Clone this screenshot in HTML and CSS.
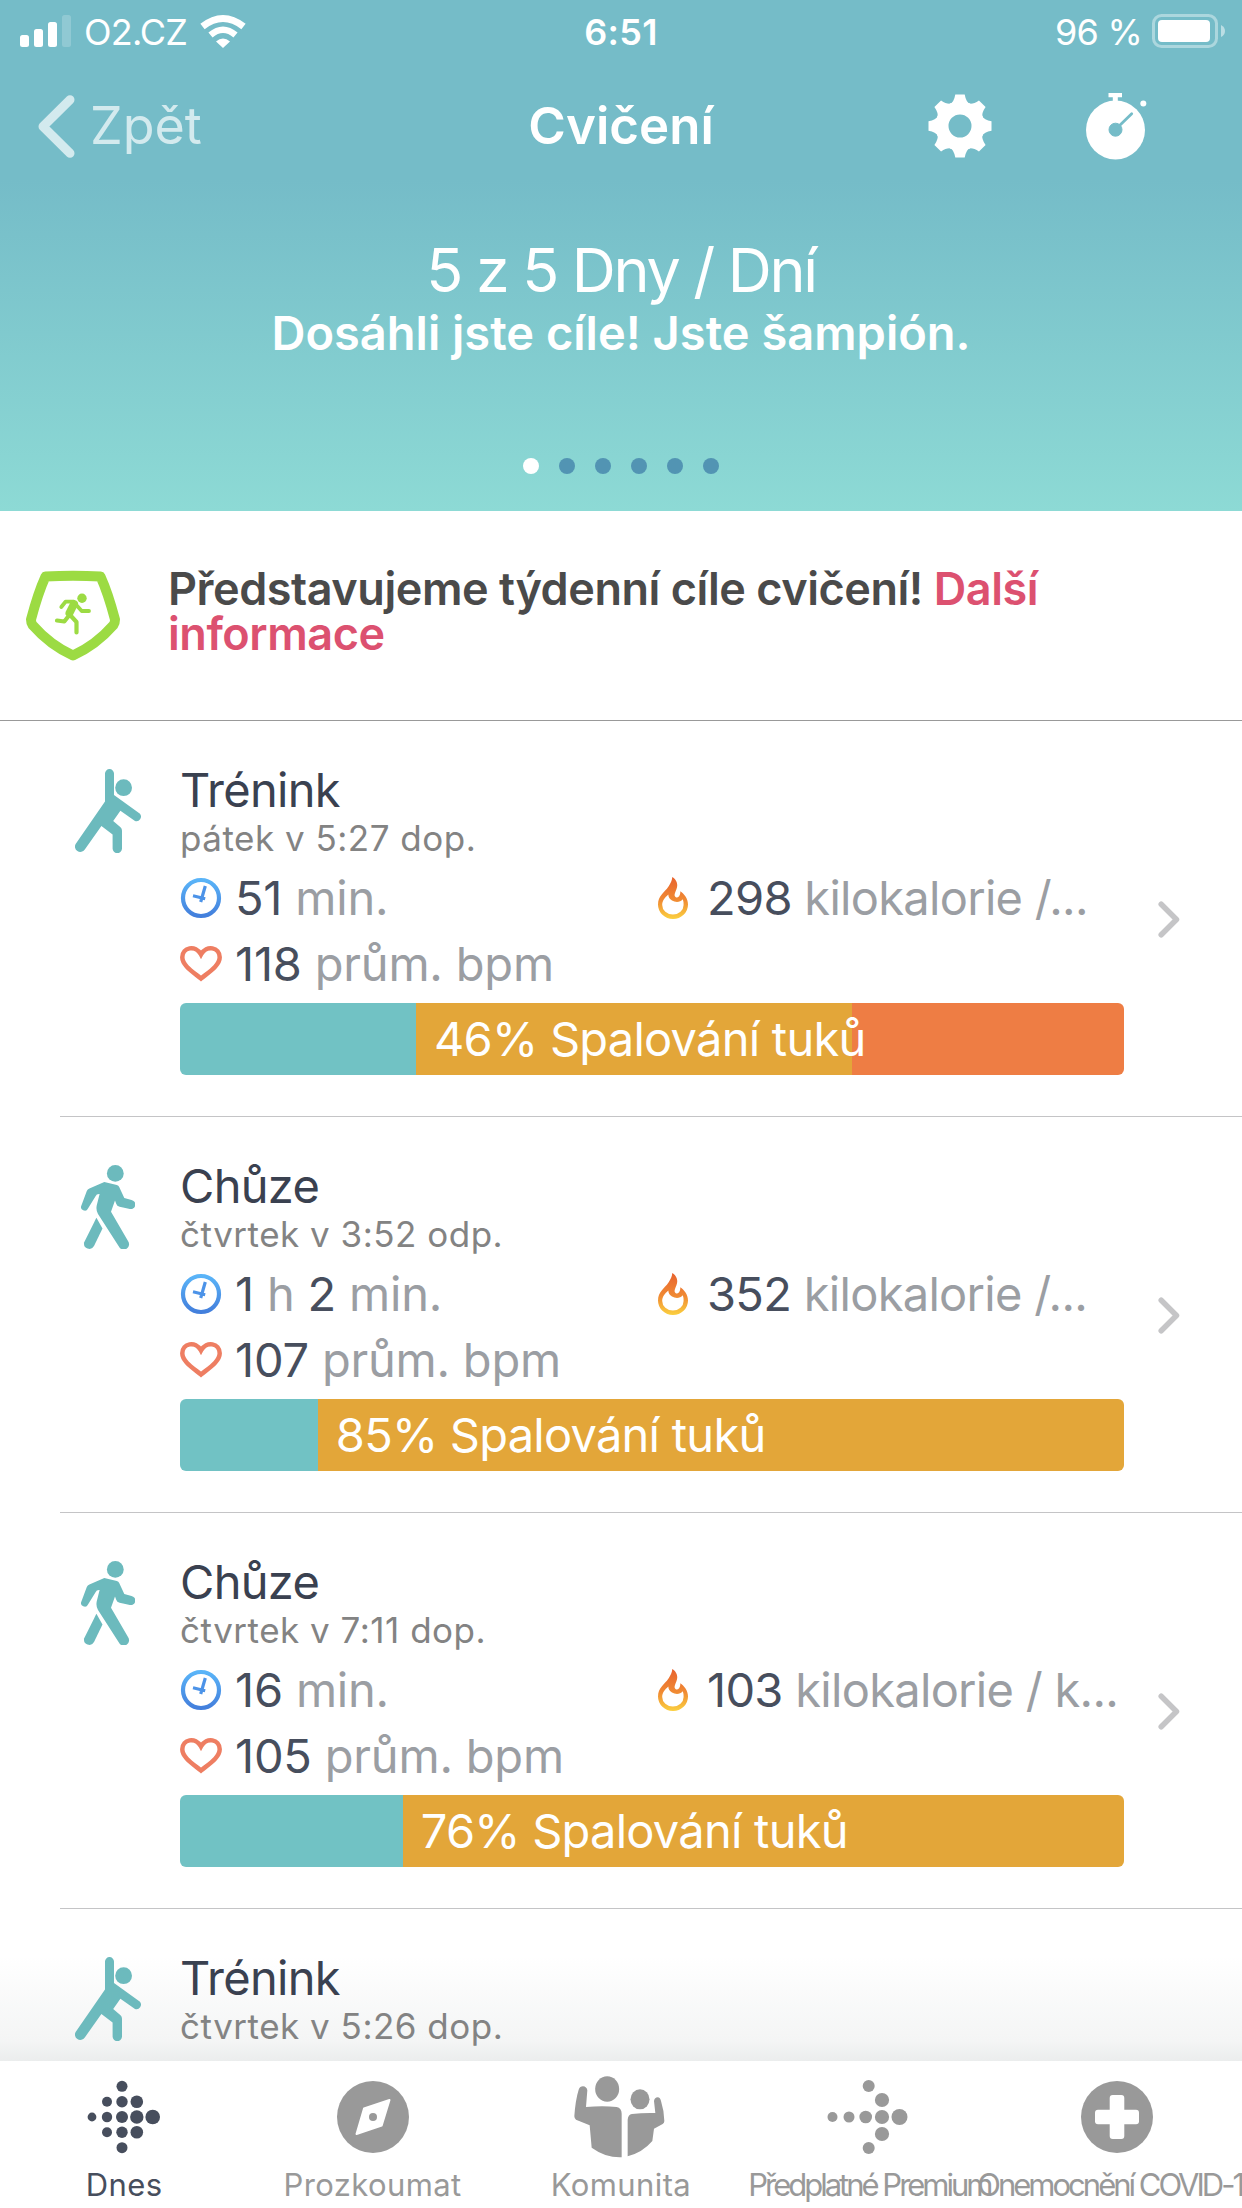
FILE: index.html
```html
<!DOCTYPE html>
<html lang="cs">
  <head>
    <meta charset="UTF-8" />
    <title>Cvičení</title>
    <meta name="viewport" content="width=device-width, initial-scale=1.0" />
    <link rel="stylesheet" href="styles.css">
  </head>
  <body>
    <!-- Shared icons -->
    <svg width="0" height="0">
      <defs>
        <linearGradient id="blue" x1="0" y1="0" x2="0" y2="1">
          <stop offset="0" stop-color="#5ab4f8" />
          <stop offset="1" stop-color="#437fdc" />
        </linearGradient>
        <linearGradient id="flame" x1="0" y1="0" x2="0" y2="1">
          <stop offset="0" stop-color="#e8632f" />
          <stop offset="0.55" stop-color="#f08a33" />
          <stop offset="1" stop-color="#fbd03f" />
        </linearGradient>
        <symbol id="icon-workout" viewBox="0 0 67 84">
          <circle cx="48.6" cy="18.7" r="8.4" />
          <path d="M30 32.5V4.6a4.5 4.5 0 0 1 9 0V26L65 44.8a4.6 4.6 0 0 1-5 7.2L45.4 41.8 38.2 52l7.3 6.2q1.5 1.3 1.5 3.5V79.5a4.7 4.7 0 0 1-9.4 0V65.5L26.4 57 9.8 80.5a5.3 5.3 0 0 1-9-5.8Z" />
        </symbol>
        <symbol id="icon-walk" viewBox="0 0 54 84">
          <circle cx="34.3" cy="8.4" r="8.4" />
          <path d="M23.3 17 35.8 20q1.8.5 2.4 2.1L43.3 33l7.2 1.9a4.6 4.6 0 0 1-1.6 9.1l-10.3-2.3q-2.7-.7-3.4-3l-1.2-3.1L30 46.7 47 76a5.3 5.3 0 0 1-8.5 6.4L17 49q-2.2-3.5-1.3-8.5l2.9-11.5q-3-.3-4.2 2.4L7 43.5a3.6 3.6 0 0 1-6.6-3L5.8 26q.7-1.8 2.6-2.6Z" />
          <path d="M15.4 52.7 21.5 63.5 13 81a5.3 5.3 0 0 1-9.8-3.8Z" />
        </symbol>
        <symbol id="icon-clock" viewBox="0 0 42 42">
          <circle cx="21" cy="21" r="18" fill="none" stroke="url(#blue)" stroke-width="4.2" />
          <path d="M25.3 9 20.7 25M13 18.8l12.2 3" fill="none" stroke="#4c93e8" stroke-width="3.2" />
        </symbol>
        <symbol id="icon-heart" viewBox="0 0 42 38">
          <path d="M21 33.5C13 27 2.3 20.5 2.3 12.3 2.3 2.5 15.5-.8 21 9.5 26.5-.8 39.7 2.5 39.7 12.3 39.7 20.5 29 27 21 33.5Z" fill="none" stroke="#ee7e62" stroke-width="4.5" />
        </symbol>
        <symbol id="icon-fire" viewBox="0 0 30 42">
          <path fill="url(#flame)" fill-rule="evenodd" d="M14.3 0C18.5 2.5 20.5 7.5 18.5 12 17 16 15.5 18.5 17.8 20.2 21 21.5 22.5 17.5 22.3 14.3 26 17 30 21.5 30 27.5A15 14.5 0 0 1 0 27.5C0 18.5 6.5 15.5 10.5 9.5 12.8 6 14 3.5 14.3 0ZM10.3 17.5C7 20.5 4.2 23.5 4.2 28A10.7 9.6 0 0 0 25.6 28Q25.8 25 24.8 22.3C22 25.5 17.5 25.5 14 23.5 11.5 22 10.5 20.5 10.3 17.5Z" />
        </symbol>
        <symbol id="icon-next" viewBox="0 0 22 37">
          <path d="M3.2 3.2 18.5 18.5 3.2 33.8" fill="none" stroke="#c5c5c7" stroke-width="5.5" stroke-linecap="round" stroke-linejoin="round" />
        </symbol>
      </defs>
    </svg>

    <div class="screen">
      <header class="header">
        <div class="status-bar">
          <div class="status-left">
            <svg width="51" height="32" viewBox="0 0 51 32" fill="#fff">
              <rect x="0" y="20" width="9" height="12" rx="2.5" />
              <rect x="14" y="14" width="9" height="18" rx="2.5" />
              <rect x="28" y="7" width="9" height="25" rx="2.5" />
              <rect x="42" y="0" width="9" height="32" rx="2.5" opacity="0.2" />
            </svg>
            <span class="carrier">O2.CZ</span>
            <svg width="46" height="33" viewBox="0 0 46 33" fill="none" stroke="#fff">
              <path d="M2.5 11.5Q23-4.5 43.5 11.5" stroke-width="7" />
              <path d="M10.5 20Q23 9.5 35.5 20" stroke-width="6.5" />
              <path d="M16 26.5Q23 20.5 30 26.5L23 33Z" fill="#fff" stroke="none" />
            </svg>
          </div>
          <span class="clock">6:51</span>
          <div class="status-right">
            <span class="percent">96 %</span>
            <svg width="74" height="34" viewBox="0 0 74 34">
              <rect x="1.5" y="1.5" width="63" height="31" rx="8" fill="none" stroke="#fff" stroke-width="3" opacity="0.4" />
              <rect x="6" y="6" width="52" height="22" rx="4" fill="#fff" />
              <path d="M69 11q4 2 4 6t-4 6Z" fill="#fff" opacity="0.5" />
            </svg>
          </div>
        </div>

        <nav class="nav">
          <a class="back" href="#">
            <svg width="37" height="63" viewBox="0 0 37 63">
              <path d="M32 4.7 5 31.5 32 58.3" fill="none" stroke="#d3eaee" stroke-width="9" stroke-linecap="round" stroke-linejoin="round" />
            </svg>
            <span>Zpět</span>
          </a>
          <h1 class="title">Cvičení</h1>
          <div class="nav-actions">
            <svg width="64" height="64" viewBox="-32 -32 64 64" fill="#fff">
              <circle r="18" fill="none" stroke="#fff" stroke-width="13" />
              <g id="teeth">
                <path id="tooth" d="M-10-22Q-6-24-4.7-31.5H4.7Q6-24 10-22Z" />
                <use href="#tooth" transform="rotate(45)" />
                <use href="#tooth" transform="rotate(90)" />
                <use href="#tooth" transform="rotate(135)" />
              </g>
              <use href="#teeth" transform="rotate(180)" />
            </svg>
            <svg width="62" height="67" viewBox="0 0 62 67" fill="#fff">
              <circle cx="29.5" cy="37" r="29.5" />
              <path d="M22.5 0h13.5v4.3h-4.2V9h-5V4.3h-4.3Z" />
              <circle cx="57.3" cy="10.5" r="3" />
              <g class="dial"><circle cx="29.5" cy="36.7" r="6.5" /><path d="M32 34 45.7 20.7" stroke-width="2.8" stroke-linecap="round" /></g>
            </svg>
          </div>
        </nav>

        <div class="goal">
          <div class="goal-count">5 z 5 Dny / Dní</div>
          <div class="goal-text">Dosáhli jste cíle! Jste šampión.</div>
        </div>
        <div class="dots">
          <span class="dot active"></span><span class="dot"></span><span class="dot"></span>
          <span class="dot"></span><span class="dot"></span><span class="dot"></span>
        </div>
      </header>

      <section class="promo">
        <svg width="94" height="90" viewBox="0 0 94 90" fill="none" stroke="#9cdb43" stroke-linejoin="round" stroke-linecap="round">
          <path d="M19.5 5.5Q47 4 74.5 5.5 82 22 89 48.5 89 52 87.5 54 70 74 47 84.5 24 74 6.5 54 5 52 5 48.5 12 22 19.5 5.5Z" stroke-width="10" />
          <circle cx="56" cy="27.3" r="4.7" fill="#9cdb43" stroke="none" />
          <path d="M48 33 43.5 42" stroke-width="8" />
          <path d="M47 30.7H39.5L35.3 36M51 34.7 55.7 40H63" stroke-width="3.8" />
          <path d="M45 45 50.5 51V61.5M43 44.5 38.3 50.5 31 49.5" stroke-width="4.2" />
        </svg>
        <p>Představujeme týdenní cíle cvičení! <a href="#">Další informace</a></p>
      </section>

      <main class="list">
        <article class="exercise">
          <svg class="type" width="67" height="84"><use href="#icon-workout" /></svg>
          <div class="info">
            <h2>Trénink</h2>
            <div class="date">pátek v 5:27 dop.</div>
            <div class="metrics">
              <div class="metric"><svg width="42" height="42"><use href="#icon-clock" /></svg><span><b>51</b> min.</span></div>
              <div class="metric energy"><svg width="30" height="42"><use href="#icon-fire" /></svg><span><b>298</b> kilokalorie /...</span></div>
              <div class="metric"><svg width="42" height="38"><use href="#icon-heart" /></svg><span><b>118</b> prům. bpm</span></div>
            </div>
            <div class="zones">
              <div class="zone light" style="width: 25%"></div>
              <div class="zone fat" style="width: 46.2%">46% Spalování tuků</div>
              <div class="zone cardio"></div>
            </div>
          </div>
          <svg class="next" width="22" height="37"><use href="#icon-next" /></svg>
        </article>

        <article class="exercise">
          <svg class="type walk" width="54" height="84"><use href="#icon-walk" /></svg>
          <div class="info">
            <h2>Chůze</h2>
            <div class="date">čtvrtek v 3:52 odp.</div>
            <div class="metrics">
              <div class="metric"><svg width="42" height="42"><use href="#icon-clock" /></svg><span><b>1</b> h <b>2</b> min.</span></div>
              <div class="metric energy"><svg width="30" height="42"><use href="#icon-fire" /></svg><span><b>352</b> kilokalorie /...</span></div>
              <div class="metric"><svg width="42" height="38"><use href="#icon-heart" /></svg><span><b>107</b> prům. bpm</span></div>
            </div>
            <div class="zones">
              <div class="zone light" style="width: 14.6%"></div>
              <div class="zone fat" style="width: 85.4%">85% Spalování tuků</div>
            </div>
          </div>
          <svg class="next" width="22" height="37"><use href="#icon-next" /></svg>
        </article>

        <article class="exercise">
          <svg class="type walk" width="54" height="84"><use href="#icon-walk" /></svg>
          <div class="info">
            <h2>Chůze</h2>
            <div class="date">čtvrtek v 7:11 dop.</div>
            <div class="metrics">
              <div class="metric"><svg width="42" height="42"><use href="#icon-clock" /></svg><span><b>16</b> min.</span></div>
              <div class="metric energy"><svg width="30" height="42"><use href="#icon-fire" /></svg><span><b>103</b> kilokalorie / k...</span></div>
              <div class="metric"><svg width="42" height="38"><use href="#icon-heart" /></svg><span><b>105</b> prům. bpm</span></div>
            </div>
            <div class="zones">
              <div class="zone light" style="width: 23.6%"></div>
              <div class="zone fat" style="width: 76.4%">76% Spalování tuků</div>
            </div>
          </div>
          <svg class="next" width="22" height="37"><use href="#icon-next" /></svg>
        </article>

        <article class="exercise last">
          <svg class="type" width="67" height="84"><use href="#icon-workout" /></svg>
          <div class="info">
            <h2>Trénink</h2>
            <div class="date">čtvrtek v 5:26 dop.</div>
          </div>
        </article>
      </main>

      <footer class="tabs">
        <a class="tab active" href="#">
          <svg width="90" height="90" viewBox="-45 -45 90 90" fill="#474e5d">
            <circle cx="-32" cy="0" r="4.4" />
            <circle cx="-17" cy="-15.3" r="5" /><circle cx="-17" cy="0" r="5.2" /><circle cx="-17" cy="15.3" r="5" />
            <circle cx="-2" cy="-30.7" r="5.5" /><circle cx="-2" cy="-15.3" r="5.7" /><circle cx="-2" cy="0" r="6" /><circle cx="-2" cy="15.3" r="5.7" /><circle cx="-2" cy="30.7" r="5.5" />
            <circle cx="12.8" cy="-15.3" r="6.3" /><circle cx="12.8" cy="0" r="6.7" /><circle cx="12.8" cy="15.3" r="6.3" />
            <circle cx="28.7" cy="0" r="7.3" />
          </svg>
          <span>Dnes</span>
        </a>
        <a class="tab" href="#">
          <svg width="90" height="90" viewBox="-45 -45 90 90">
            <circle r="36" fill="#999" />
            <path d="M16.5-17 8.7 8.5-16.5 17-9-8.5Z" fill="#fff" stroke="#fff" stroke-width="2" stroke-linejoin="round" />
            <circle r="4" fill="#999" />
          </svg>
          <span>Prozkoumat</span>
        </a>
        <a class="tab" href="#">
          <svg width="90" height="90" viewBox="50 35 270 270" fill="#999">
            <ellipse cx="143.5" cy="86" rx="36" ry="38" />
            <path d="M58 88Q62 78 71 78 82 79 84 90L80 140Q130 136 172 140 187 143 187 160V291Q140 293 97 262L91 195 50 178Q45 174 45 168 48 120 58 88Z" overflow="visible" />
            <ellipse cx="242" cy="117" rx="28.5" ry="30" />
            <path d="M205 288V178Q206 163 218 161 250 157 288 158L284 122Q286 111 295 111 303 112 305 122 314 150 315 182 315 188 310 191L284 205 279 242Q250 276 205 288Z" />
          </svg>
          <span>Komunita</span>
        </a>
        <a class="tab tight" href="#">
          <svg width="90" height="90" viewBox="-45 -45 90 90" fill="#999">
            <circle cx="-36.5" cy="0" r="5" /><circle cx="-20" cy="0" r="5.5" /><circle cx="-3.3" cy="0" r="6.3" />
            <circle cx="13" cy="0" r="7.1" /><circle cx="30.5" cy="0" r="8" />
            <circle cx="13" cy="-17" r="7.1" /><circle cx="13" cy="17" r="7.1" />
            <circle cx="-.3" cy="-31" r="6" /><circle cx="-.3" cy="31" r="6" />
          </svg>
          <span>Předplatné Premium</span>
        </a>
        <a class="tab tight" href="#">
          <svg width="90" height="90" viewBox="-44 -45 90 90">
            <circle r="36" fill="#999" />
            <rect x="-7.3" y="-22" width="14.6" height="44" rx="3" fill="#fff" />
            <rect x="-22" y="-7.3" width="44" height="14.6" rx="3" fill="#fff" />
          </svg>
          <span>Onemocnění COVID-19</span>
        </a>
      </footer>
    </div>
  </body>
</html>
```
FILE: styles.css
```css
* {
  box-sizing: border-box;
}
body {
  margin: 0;
  font-family: "Inter", sans-serif;
  background: #fff;
}
svg {
  display: block;
  flex-shrink: 0;
  overflow: visible;
}
a {
  color: inherit;
  text-decoration: none;
}
h1,
h2,
p {
  margin: 0;
}
.screen {
  width: 1242px;
  height: 2208px;
  overflow: hidden;
  display: flex;
  flex-direction: column;
}

/* Header */
.header {
  height: 511px;
  flex-shrink: 0;
  color: #fff;
  background: linear-gradient(#75bcc8 180px, #8ddad5);
}
.status-bar {
  height: 60px;
  padding: 0 16px;
  display: grid;
  grid-template-columns: 1fr auto 1fr;
  align-items: center;
  font-size: 36px;
  line-height: 60px;
}
.status-bar span {
  padding-top: 2px;
}
.status-left,
.status-right {
  display: flex;
  align-items: center;
}
.status-left {
  gap: 13px;
  padding-left: 4px;
}
.status-right {
  justify-content: flex-end;
  gap: 10px;
}
.carrier,
.percent {
  letter-spacing: -0.8px;
}
.clock {
  font-weight: 600;
  letter-spacing: 0.3px;
}
.nav {
  height: 132px;
  padding: 0 38px;
  display: grid;
  grid-template-columns: 1fr auto 1fr;
  align-items: center;
}
.back {
  display: flex;
  align-items: center;
  gap: 15px;
  font-size: 52px;
  color: #d3eaee;
}
.back span,
.title {
  padding-bottom: 2px;
}
.title {
  font-size: 51px;
  font-weight: 600;
}
.nav-actions {
  display: flex;
  align-items: center;
  justify-content: flex-end;
  gap: 94px;
  padding-right: 56px;
}
.dial {
  fill: #75bcc8;
  stroke: #75bcc8;
}
.goal {
  padding-top: 42px;
  text-align: center;
}
.goal-count {
  font-size: 61px;
  line-height: 72px;
  letter-spacing: -2.3px;
}
.goal-text {
  font-size: 47px;
  font-weight: 600;
  line-height: 54px;
}
.dots {
  display: flex;
  justify-content: center;
  gap: 20px;
  margin-top: 98px;
}
.dot {
  width: 16px;
  height: 16px;
  border-radius: 50%;
  background: #5294b3;
}
.dot.active {
  background: #fff;
}

/* Promo */
.promo {
  height: 210px;
  flex-shrink: 0;
  padding: 60px 180px 0 26px;
  display: flex;
  gap: 48px;
  border-bottom: 1px solid #999;
}
.promo p {
  margin-top: -5px;
  font-size: 45px;
  font-weight: 600;
  line-height: 45px;
  letter-spacing: -0.45px;
  color: #4a4a4a;
}
.promo a {
  color: #dc5170;
}

/* Exercise list */
.list {
  height: 1340px;
  flex-shrink: 0;
  overflow: hidden;
  padding-left: 60px;
  background: linear-gradient(#fff 1235px, #f4f5f5 1320px, #ebeded);
}
.exercise {
  height: 396px;
  display: flex;
  align-items: flex-start;
  padding-top: 45px;
  border-bottom: 1px solid #c4c4c6;
}
.exercise.last {
  border-bottom: none;
}
.type {
  margin: 3px 38px 0 15px;
  fill: #6cbabd;
}
.type.walk {
  margin: 3px 45px 0 21px;
}
.info {
  width: 944px;
}
h2 {
  font-size: 47px;
  font-weight: 400;
  line-height: 48px;
  letter-spacing: -0.7px;
  color: #3a4150;
}
.date {
  margin-top: 2px;
  font-size: 35px;
  line-height: 44px;
  letter-spacing: 0.5px;
  color: #838383;
}
.metrics {
  display: grid;
  grid-template-columns: 478px 1fr;
  margin: 5px 0 6px;
  font-size: 47px;
  line-height: 66px;
  letter-spacing: -0.2px;
  color: #9b9ea3;
}
.metric {
  display: flex;
  align-items: center;
  gap: 13px;
  white-space: nowrap;
}
.metric.energy {
  gap: 19px;
  letter-spacing: -0.7px;
}
.metric b {
  font-weight: 400;
  color: #474e5d;
}
.zones {
  display: flex;
  height: 72px;
  border-radius: 6px;
  overflow: hidden;
}
.zone {
  font-size: 47px;
  line-height: 72px;
  letter-spacing: -0.75px;
  color: #fff;
  white-space: nowrap;
}
.light {
  background: #71c2c4;
}
.fat {
  z-index: 1;
  padding-left: 18px;
  background: #e3a639;
}
.cardio {
  flex: 1;
  background: #ee7d44;
}
.next {
  margin: 135px 0 0 34px;
}

/* Tab bar */
.tabs {
  flex: 1;
  display: grid;
  grid-template-columns: repeat(5, 248.4px);
  padding-top: 11px;
  background: #fff;
}
.tab {
  display: flex;
  flex-direction: column;
  align-items: center;
  font-size: 31px;
  line-height: 46px;
  letter-spacing: 0.4px;
  color: #999;
  white-space: nowrap;
}
.tab.active {
  color: #474e5d;
}
.tab.tight {
  letter-spacing: -3px;
}
```
